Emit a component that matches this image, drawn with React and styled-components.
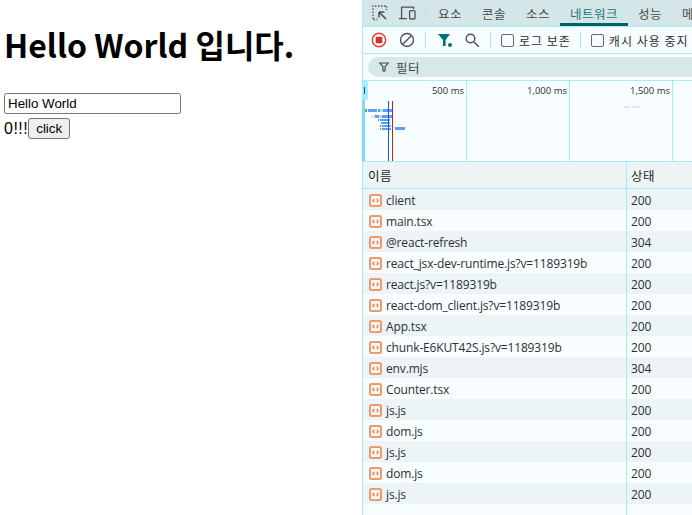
import React from 'react';
import styled, { createGlobalStyle } from 'styled-components';

const GlobalStyle = createGlobalStyle`
  html, body {
    margin: 0;
    height: 100%;
    background: #fff;
    overflow: hidden;
  }
  #root {
    height: 100%;
  }
`;

const KR = `"Noto Sans CJK KR", "Noto Sans", sans-serif`;
const UI = `"Open Sans", "Noto Sans CJK KR", sans-serif`;
const LINE = '#a3ebff';
const BAR = '#5f9df7';

const Shell = styled.div`
  display: flex;
  width: 692px;
  height: 515px;
  overflow: hidden;
`;

const Page = styled.main`
  width: 362px;
  flex: none;
  padding: 0 4px;
  box-sizing: border-box;
  font-family: "Liberation Serif", serif;
  font-size: 16px;
  color: #000;
`;

const Title = styled.h1`
  margin: 21px 0 26px 0;
  font-family: ${KR};
  font-size: 32px;
  line-height: 46px;
  font-weight: 700;
  white-space: nowrap;
`;

const TextInput = styled.input`
  display: block;
  width: 177px;
  height: 21px;
  box-sizing: border-box;
  padding: 1px 3px;
  border: 1px solid #767676;
  border-radius: 2.5px;
  font-family: "Liberation Sans", sans-serif;
  font-size: 13.33px;
  color: #000;
`;

const CounterRow = styled.div`
  display: flex;
  align-items: center;
  margin-top: 4px;
  font-family: "Liberation Sans", sans-serif;
  font-size: 16px;
  letter-spacing: 0.5px;
`;

const ClickButton = styled.button`
  height: 21px;
  padding: 0 7px;
  border: 1px solid #767676;
  border-radius: 3px;
  background: #efefef;
  font-family: "Liberation Sans", sans-serif;
  font-size: 13.33px;
  color: #000;
`;

const Panel = styled.section`
  flex: 1;
  min-width: 0;
  display: flex;
  flex-direction: column;
  border-left: 1px solid ${LINE};
  background: #f8fdff;
  font-family: ${UI};
  color: #1f1f1f;
`;

const TabBar = styled.div`
  height: 26px;
  flex: none;
  display: flex;
  align-items: center;
  padding-left: 7px;
  background: #d5e6e8;
  border-bottom: 1px solid ${LINE};
`;

const IconSlot = styled.span`
  display: flex;
  width: ${p => p.$w || 28}px;
  justify-content: center;
  align-items: center;
  flex: none;
`;

const Divider = styled.span`
  width: 1px;
  height: 16px;
  flex: none;
  margin: 0 ${p => p.$r}px 0 ${p => p.$l}px;
  background: #b4e4ee;
`;

const Tab = styled.span`
  height: 26px;
  flex: none;
  display: flex;
  align-items: center;
  padding: ${p => (p.$active ? '3px' : '0')} 10px 0;
  font-family: ${KR};
  font-size: 12.5px;
  letter-spacing: 0.5px;
  color: ${p => (p.$active ? '#1a7480' : '#3f4a4c')};
  border-bottom: ${p => (p.$active ? '3px solid #00616b' : '0')};
  border-radius: 3px 3px 0 0;
  box-sizing: border-box;
`;

const Toolbar = styled.div`
  height: 26px;
  flex: none;
  display: flex;
  align-items: center;
  padding-left: 2px;
  border-bottom: 1px solid ${LINE};
  background: #f8fdff;
`;

const CheckLabel = styled.label`
  display: flex;
  align-items: center;
  gap: 5px;
  flex: none;
  font-family: ${KR};
  font-size: 12px;
  letter-spacing: 1px;
  white-space: nowrap;
  color: #2b3133;
`;

const CheckBox = styled.span`
  width: 11px;
  height: 11px;
  flex: none;
  border: 1px solid #5f6b6d;
  border-radius: 2px;
`;

const FilterBar = styled.div`
  height: 26px;
  flex: none;
  display: flex;
  align-items: center;
  padding-left: 5px;
  background: #f8fdff;
`;

const FilterPill = styled.div`
  flex: 1;
  height: 20px;
  display: flex;
  align-items: center;
  gap: 7px;
  padding-left: 11px;
  border-radius: 10px 0 0 10px;
  background: #d8e8ea;
  font-family: ${KR};
  font-size: 12.5px;
  letter-spacing: 0.5px;
  color: #3f4a4c;
`;

const Overview = styled.div`
  position: relative;
  height: 82px;
  flex: none;
  display: flex;
  background: #f8fdff;
  border-top: 1px solid ${LINE};
  border-bottom: 1px solid ${LINE};
  box-sizing: border-box;
`;

const Tick = styled.div`
  width: 103px;
  flex: none;
  box-sizing: border-box;
  padding: 3px 2px 0 0;
  text-align: right;
  border-right: 1px solid ${LINE};
  font-size: 9.5px;
  line-height: 14px;
  color: #2b3133;
  &:first-child {
    width: 104px;
  }
`;

const Waterfall = styled.svg`
  position: absolute;
  left: -1px;
  top: -1px;
`;

const Table = styled.div`
  flex: 1;
  display: grid;
  grid-template-columns: 263px 1fr;
  grid-template-rows: 27px;
  grid-auto-rows: 21px;
  align-content: start;
  position: relative;
`;

const HeadCell = styled.div`
  height: 27px;
  box-sizing: border-box;
  display: flex;
  align-items: center;
  padding-left: 5px;
  background: #ecf4f6;
  border-bottom: 1px solid ${LINE};
  font-family: ${KR};
  font-size: 12.5px;
  letter-spacing: 0.5px;
  color: #1f1f1f;
`;

const Cell = styled.div`
  display: flex;
  align-items: center;
  gap: 4px;
  padding: 1px 0 0 ${p => p.$pad}px;
  background: ${p => (p.$odd ? '#ecf4f6' : '#f8fdff')};
  font-size: 12px;
  letter-spacing: -0.15px;
  white-space: nowrap;
  color: #2b3133;
`;

const ColumnLine = styled.div`
  position: absolute;
  left: 263px;
  top: 0;
  bottom: 0;
  width: 1px;
  background: ${LINE};
`;

const Inspect = () => (
  <svg width="16" height="16" viewBox="0 0 16 16" fill="none" stroke="#4a5456" strokeWidth="1.3">
    <path d="M1 14V1h13" strokeDasharray="1.5 1.5" />
    <path d="M1.5 14.5h4M14.5 1v4" strokeDasharray="1.5 1.5" />
    <path d="M7 7h5.5M7 7v5.5M7 7l7 7" strokeWidth="1.6" />
  </svg>
);

const Device = () => (
  <svg width="17" height="14" viewBox="0 0 17 14" fill="none" stroke="#4a5456" strokeWidth="1.3">
    <path d="M0 12.6h8M2.6 12V1.2h12V3" />
    <rect x="10.6" y="4.6" width="5.4" height="8.4" rx="1" />
  </svg>
);

const RecordIcon = () => (
  <svg width="16" height="16" viewBox="0 0 16 16">
    <circle cx="8" cy="8" r="6.7" fill="none" stroke="#e53935" strokeWidth="1.4" />
    <rect x="4.7" y="4.7" width="6.6" height="6.6" rx="1" fill="#d93025" />
  </svg>
);

const ClearIcon = () => (
  <svg width="16" height="16" viewBox="0 0 16 16" fill="none" stroke="#4a5456" strokeWidth="1.4">
    <circle cx="8" cy="8" r="6.5" />
    <path d="M3.5 12.5l9-9" />
  </svg>
);

const FilterIcon = () => (
  <svg width="16" height="16" viewBox="0 0 16 16">
    <path d="M1 2h12L8.6 8v6H6V8z" fill="#00727d" />
    <circle cx="13" cy="13" r="2" fill="#00727d" />
  </svg>
);

const SearchIcon = () => (
  <svg width="16" height="16" viewBox="0 0 16 16" fill="none" stroke="#4a5456" strokeWidth="1.5">
    <circle cx="6.5" cy="6.5" r="4.3" />
    <path d="M10 10l4.8 4.8" />
  </svg>
);

const FunnelOutline = () => (
  <svg width="10" height="10" viewBox="0 0 10 10" fill="none" stroke="#3f4a4c" strokeWidth="1.2">
    <path d="M.8 1h8.4L6 5v4H4V5z" />
  </svg>
);

const FileIcon = () => (
  <svg width="13" height="13" viewBox="0 0 13 13" style={{ flex: 'none' }}>
    <rect x="1" y="1" width="11" height="11" rx="1.5" fill="#fdf6f1" stroke="#ee9a6f" strokeWidth="2" />
    <path d="M5.2 4.8L3.9 6.5l1.3 1.7M7.8 4.8l1.3 1.7-1.3 1.7" fill="none" stroke="#e8703a" strokeWidth="1.2" />
  </svg>
);

// x, y, width, height, colour of each request bar, measured from the panel edge
const BARS = [
  [3, 29, 2, 3, '#3fbf5f'], [6, 29, 9, 3, BAR], [16, 29, 2, 3, '#3fbf5f'],
  [18, 29, 3, 3, '#c4dcfb'], [21, 29, 9, 3, BAR],
  [9, 35, 4, 3, '#e3e8ea'], [13, 35, 4, 3, BAR], [17, 35, 3, 3, '#c4dcfb'], [20, 35, 10, 3, BAR],
  [16, 39, 1, 2, '#3fbf5f'], [18, 39, 10, 2, BAR],
  [19, 42, 9, 2, BAR],
  [18, 45, 1, 2, '#3fbf5f'], [20, 45, 9, 2, BAR],
  [18, 48, 1, 2, '#3fbf5f'], [20, 48, 9, 2, BAR], [33, 47, 10, 3, BAR],
  [262, 26, 6, 2, '#e6e9ea'], [270, 26, 9, 2, '#e6e9ea'],
];

const REQUESTS = [
  ['client', 200],
  ['main.tsx', 200],
  ['@react-refresh', 304],
  ['react_jsx-dev-runtime.js?v=1189319b', 200],
  ['react.js?v=1189319b', 200],
  ['react-dom_client.js?v=1189319b', 200],
  ['App.tsx', 200],
  ['chunk-E6KUT42S.js?v=1189319b', 200],
  ['env.mjs', 304],
  ['Counter.tsx', 200],
  ['js.js', 200],
  ['dom.js', 200],
  ['js.js', 200],
  ['dom.js', 200],
  ['js.js', 200],
];

const App = () => (
  <Shell>
    <GlobalStyle />
    <Page>
      <Title>Hello World 입니다.</Title>
      <TextInput defaultValue="Hello World" />
      <CounterRow>
        0!!!<ClickButton>click</ClickButton>
      </CounterRow>
    </Page>
    <Panel>
      <TabBar>
        <IconSlot $w={20}><Inspect /></IconSlot>
        <IconSlot $w={34}><Device /></IconSlot>
        <Divider $l={1} $r={2} />
        <Tab>요소</Tab>
        <Tab>콘솔</Tab>
        <Tab>소스</Tab>
        <Tab $active>네트워크</Tab>
        <Tab>성능</Tab>
        <Tab>메모리</Tab>
      </TabBar>
      <Toolbar>
        <IconSlot><RecordIcon /></IconSlot>
        <IconSlot><ClearIcon /></IconSlot>
        <Divider $l={4} $r={6} />
        <IconSlot $w={26}><FilterIcon /></IconSlot>
        <IconSlot><SearchIcon /></IconSlot>
        <Divider $l={4} $r={10} />
        <CheckLabel><CheckBox />로그 보존</CheckLabel>
        <Divider $l={9} $r={10} />
        <CheckLabel><CheckBox />캐시 사용 중지</CheckLabel>
      </Toolbar>
      <FilterBar>
        <FilterPill><FunnelOutline />필터</FilterPill>
      </FilterBar>
      <Overview>
        <Tick>500 ms</Tick>
        <Tick>1,000 ms</Tick>
        <Tick>1,500 ms</Tick>
        <Waterfall width="300" height="82" viewBox="0 0 300 82">
          <rect x="0" y="1" width="3" height="80" fill="#7fdcf5" />
          <rect x="0" y="1" width="6" height="19" rx="2" fill="#a3ebff" />
          <rect x="2" y="7" width="1" height="7" fill="#00616b" />
          {BARS.map(([x, y, w, h, c]) => (
            <rect key={`${x}-${y}`} x={x} y={y} width={w} height={h} fill={c} />
          ))}
          <rect x="26" y="21" width="1" height="60" fill="#1a56d6" />
          <rect x="30" y="21" width="1" height="60" fill="#c5221f" />
        </Waterfall>
      </Overview>
      <Table>
        <HeadCell>이름</HeadCell>
        <HeadCell>상태</HeadCell>
        {REQUESTS.map(([name, status], i) => (
          <React.Fragment key={`${name}-${i}`}>
            <Cell $pad={6} $odd={i % 2 === 0}><FileIcon />{name}</Cell>
            <Cell $pad={5} $odd={i % 2 === 0}>{status}</Cell>
          </React.Fragment>
        ))}
        <ColumnLine />
      </Table>
    </Panel>
  </Shell>
);

export default App;
